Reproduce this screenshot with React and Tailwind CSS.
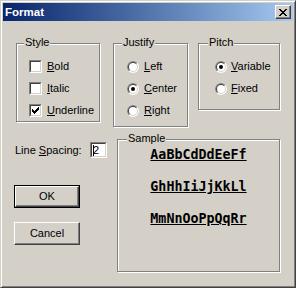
import React from 'react';

const Check = () => (
  <svg width="7" height="7" viewBox="0 0 7 7" shapeRendering="crispEdges">
    <path d="M0 2h1v3H0z M1 3h1v3H1z M2 4h1v3H2z M3 3h1v3H3z M4 2h1v3H4z M5 1h1v3H5z M6 0h1v3H6z" fill="#000" />
  </svg>
);

const Checkbox = ({ checked }) => (
  <div className="w-[13px] h-[13px] shrink-0 border border-t-[#808080] border-l-[#808080] border-r-white border-b-white">
    <div className="w-full h-full flex items-center justify-center bg-white border border-t-[#404040] border-l-[#404040] border-r-[#d4d0c8] border-b-[#d4d0c8]">
      {checked && <Check />}
    </div>
  </div>
);

const Radio = ({ checked }) => (
  <svg width="12" height="12" viewBox="0 0 12 12" className="shrink-0">
    <circle cx="6" cy="6" r="6" fill="#fff" />
    <path d="M1.757 10.243 A6 6 0 0 1 10.243 1.757 Z" fill="#808080" />
    <circle cx="6" cy="6" r="5" fill="#d4d0c8" />
    <path d="M2.464 9.536 A5 5 0 0 1 9.536 2.464 Z" fill="#404040" />
    <circle cx="6" cy="6" r="4" fill="#fff" />
    {checked && <circle cx="6" cy="6" r="2" fill="#000" />}
  </svg>
);

const Group = ({ label, labelLeft = 'left-[7px]', className = '', children }) => (
  <div className={`relative shrink-0 border border-[#808080] shadow-[1px_1px_#fff,inset_1px_1px_#fff] ${className}`}>
    <span className={`absolute -top-[8px] ${labelLeft} bg-[#d4d0c8] px-[1px] leading-[13px]`}>{label}</span>
    {children}
  </div>
);

const Option = ({ control, gap, accel, rest }) => (
  <div className="flex items-center h-[13px]">
    {control}
    <span className={`${gap} leading-[13px]`}>
      <u>{accel}</u>{rest}
    </span>
  </div>
);

const Button = ({ children, isDefault }) => {
  const inner = (
    <div className="w-full h-full flex items-center justify-center border border-t-white border-l-white border-r-[#404040] border-b-[#404040] shadow-[inset_-1px_-1px_#808080]">
      {children}
    </div>
  );
  return isDefault ? (
    <div className="w-[66px] h-[23px] border border-black">{inner}</div>
  ) : (
    <div className="w-[66px] h-[23px]">{inner}</div>
  );
};

const CloseGlyph = () => (
  <svg width="8" height="7" viewBox="0 0 8 7" shapeRendering="crispEdges">
    <path
      d="M0 0h2v1H0z M6 0h2v1H6z M1 1h2v1H1z M5 1h2v1H5z M2 2h4v1H2z M3 3h2v1H3z M2 4h4v1H2z M1 5h2v1H1z M5 5h2v1H5z M0 6h2v1H0z M6 6h2v1H6z"
      fill="#000"
    />
  </svg>
);

export default function App() {
  return (
    <div className="w-[296px] h-[288px] bg-[#d4d0c8] border border-t-[#d4d0c8] border-l-[#d4d0c8] border-r-[#404040] border-b-[#404040] font-['Liberation_Sans',Arial,sans-serif] text-[11px] text-black select-none">
      <div className="w-full h-full p-[2px] shadow-[inset_1px_1px_#fff,inset_-1px_-1px_#808080]">
        {/* title bar */}
        <div className="h-[18px] flex items-center justify-between pl-[2px] pr-[2px] bg-gradient-to-r from-[#0a246a] to-[#a6caf0]">
          <span className="text-white font-bold text-[11.5px] leading-[18px]">Format</span>
          <div className="w-[16px] h-[14px] flex items-center justify-center bg-[#d4d0c8] border border-t-white border-l-white border-r-[#404040] border-b-[#404040] shadow-[inset_-1px_-1px_#808080]">
            <CloseGlyph />
          </div>
        </div>

        {/* group boxes */}
        <div className="flex items-start mt-[22px] ml-[13px]">
          <Group label="Style" className="w-[84px] h-[79px]">
            <div className="flex flex-col gap-[9px] pt-[16px] pl-[12px]">
              <Option control={<Checkbox />} gap="ml-[5px]" accel="B" rest="old" />
              <Option control={<Checkbox />} gap="ml-[5px]" accel="I" rest="talic" />
              <Option control={<Checkbox checked />} gap="ml-[5px]" accel="U" rest="nderline" />
            </div>
          </Group>
          <Group label="Justify" labelLeft="left-[8px]" className="ml-[13px] w-[75px] h-[84px]">
            <div className="flex flex-col gap-[9px] pt-[16px] pl-[13px]">
              <Option control={<Radio />} gap="ml-[5px]" accel="L" rest="eft" />
              <Option control={<Radio checked />} gap="ml-[5px]" accel="C" rest="enter" />
              <Option control={<Radio />} gap="ml-[5px]" accel="R" rest="ight" />
            </div>
          </Group>
          <Group label="Pitch" labelLeft="left-[9px]" className="ml-[10px] w-[82px] h-[67px]">
            <div className="flex flex-col gap-[9px] pt-[16px] pl-[16px]">
              <Option control={<Radio checked />} gap="ml-[4px]" accel="V" rest="ariable" />
              <Option control={<Radio />} gap="ml-[4px]" accel="F" rest="ixed" />
            </div>
          </Group>
        </div>

        {/* line spacing, buttons and sample */}
        <div className="flex items-start mt-[12px] ml-[11px]">
          <div className="w-[103px] flex flex-col">
            <div className="flex items-center mt-[3px]">
              <span className="w-[76px] pl-[1px] leading-[13px]">
                Line <u>S</u>pacing:
              </span>
              <div className="w-[17px] h-[16px] border border-t-[#808080] border-l-[#808080] border-r-white border-b-white">
                <div className="w-full h-full flex items-center bg-white border border-t-[#404040] border-l-[#404040] border-r-[#d4d0c8] border-b-[#d4d0c8] pl-[1px]">
                  <span className="w-[1px] h-[11px] bg-black" />
                  <span className="-ml-[1px] leading-[12px]">2</span>
                </div>
              </div>
            </div>
            <div className="mt-[27px]">
              <Button isDefault>OK</Button>
            </div>
            <div className="mt-[14px]">
              <Button>Cancel</Button>
            </div>
          </div>
          <Group label="Sample" labelLeft="left-[9px]" className="w-[163px] h-[133px]">
            <div className="flex flex-col items-center gap-[16px] pt-[7px] font-['DejaVu_Sans_Mono',monospace] font-bold text-[13.33px] leading-[16px]">
              <span className="underline underline-offset-[1px]">AaBbCdDdEeFf</span>
              <span className="underline underline-offset-[1px]">GhHhIiJjKkLl</span>
              <span className="underline underline-offset-[1px]">MmNnOoPpQqRr</span>
            </div>
          </Group>
        </div>
      </div>
    </div>
  );
}
